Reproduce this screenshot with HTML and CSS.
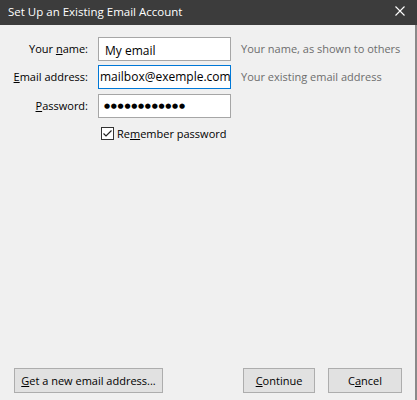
FILE: index.html
```html
<!DOCTYPE html>
<html lang="en">
<head>
    <meta charset="UTF-8">
    <meta name="viewport" content="width=device-width, initial-scale=1.0">
    <link rel="stylesheet" href="styles.css">
    <title>Set Up an Existing Email Account</title>
</head>
<body>
    <div class="window">
        <div class="titlebar">
            <span class="title">Set Up an Existing Email Account</span>
            <svg class="close" width="10" height="10" viewBox="0 0 10 10">
                <path d="M0.5 0.5 L9.5 9.5 M9.5 0.5 L0.5 9.5" stroke="#fff" stroke-width="1.1" fill="none"/>
            </svg>
        </div>

        <div class="content">
            <div class="form">
                <label class="label">Your <u>n</u>ame:</label>
                <div class="field name-field">My email</div>
                <span class="hint">Your name, as shown to others</span>

                <label class="label"><u>E</u>mail address:</label>
                <div class="field field-focus">mailbox@exemple.com</div>
                <span class="hint">Your existing email address</span>

                <label class="label"><u>P</u>assword:</label>
                <div class="field pass-field">●●●●●●●●●●●●</div>
                <span></span>

                <span></span>
                <div class="remember">
                    <svg class="check" width="13" height="13" viewBox="0 0 13 13">
                        <rect x="0.5" y="0.5" width="12" height="12" fill="#fff" stroke="#333"/>
                        <path d="M2.5 6.5 L5 9 L10.5 3.5" stroke="#222" stroke-width="1.2" fill="none"/>
                    </svg>
                    <span>Re<u>m</u>ember password</span>
                </div>
                <span></span>
            </div>

            <div class="footer">
                <button class="btn btn-new"><u>G</u>et a new email address...</button>
                <div class="actions">
                    <button class="btn btn-continue"><u>C</u>ontinue</button>
                    <button class="btn btn-cancel">C<u>a</u>ncel</button>
                </div>
            </div>
        </div>
    </div>
</body>
</html>
```

FILE: styles.css
```css
body {
    margin: 0;
    padding: 0;
    font-family: 'Open Sans', 'Noto Sans', sans-serif;
    font-size: 11px;
    color: #000;
    background: #f0f0f0;
}

.window {
    width: 417px;
    height: 400px;
    display: flex;
    flex-direction: column;
    overflow: hidden;
}

.titlebar {
    height: 25px;
    background: #3c3c3c;
    color: #fff;
    display: flex;
    align-items: center;
    padding: 0 10px 0 8px;
    font-size: 11.5px;
}

.title {
    flex-grow: 1;
    margin-top: -2px;
}

.close {
    margin-top: -3px;
    margin-right: 2px;
}

.content {
    flex-grow: 1;
    display: flex;
    flex-direction: column;
    background: #f0f0f0;
    border-right: 2px solid #8a8a8a;
    padding: 12px 0 0 8px;
}

.form {
    display: grid;
    grid-template-columns: 80px 133px auto;
    grid-template-rows: 28px 29px 24px auto;
    column-gap: 10px;
    align-items: start;
}

.label {
    text-align: right;
    height: 24px;
    line-height: 24px;
    white-space: nowrap;
}

.field {
    box-sizing: border-box;
    height: 24px;
    border: 1px solid #a6a6a6;
    background: #fff;
    font-size: 12px;
    line-height: 22px;
    padding: 0 6px;
    white-space: nowrap;
    overflow: hidden;
}

.name-field {
    line-height: 25px;
}

.field-focus {
    border-color: #0078d7;
    padding: 0 1px;
}

.pass-field {
    font-family: 'DejaVu Sans', sans-serif;
    font-size: 7px;
    letter-spacing: 0.7px;
    line-height: 22px;
    padding-left: 5px;
}

.hint {
    color: #6d6d6d;
    height: 24px;
    line-height: 24px;
    white-space: nowrap;
}

.remember {
    display: flex;
    align-items: center;
    gap: 3px;
    margin-top: 9px;
    padding-left: 3px;
    height: 13px;
}

.check {
    flex-shrink: 0;
}

.footer {
    margin-top: auto;
    display: flex;
    justify-content: space-between;
    padding: 0 13px 7px 6px;
}

.actions {
    display: flex;
    gap: 13px;
}

.btn {
    box-sizing: border-box;
    height: 25px;
    padding: 0 6px;
    background: #e1e1e1;
    border: 1px solid #adadad;
    border-radius: 0;
    font-family: 'Open Sans', 'Noto Sans', sans-serif;
    font-size: 11px;
    color: #000;
}

.btn-new {
    width: 149px;
}

.btn-continue {
    width: 72px;
}

.btn-cancel {
    width: 74px;
}
```
